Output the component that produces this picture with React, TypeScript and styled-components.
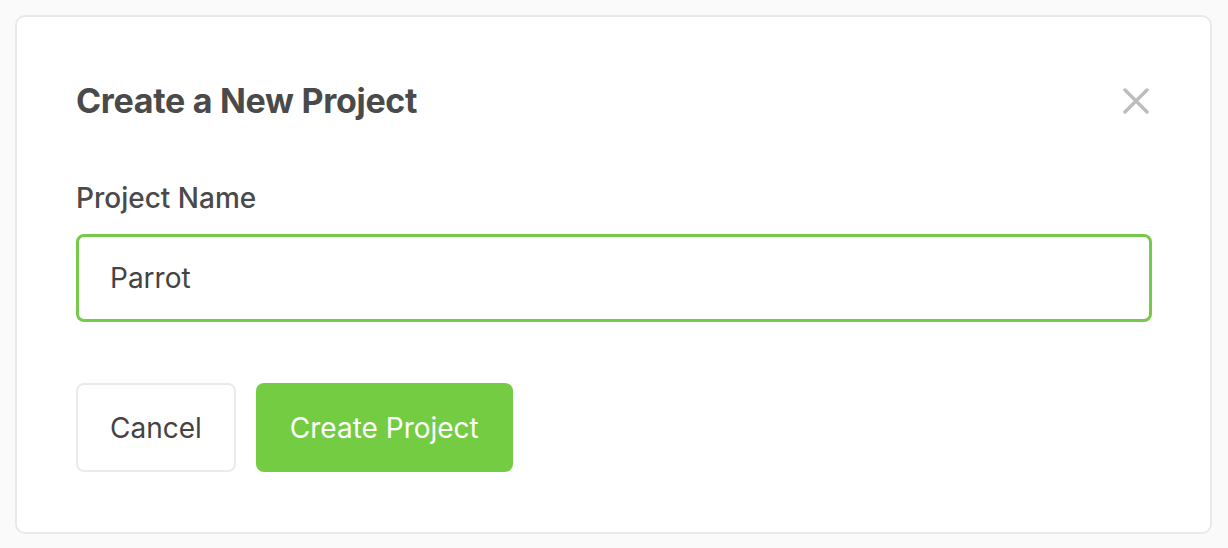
import React from "react";
import styled, { createGlobalStyle } from "styled-components";

const GlobalStyle = createGlobalStyle`
  html, body {
    margin: 0;
    padding: 0;
    background: #fafafa;
    font-family: Inter, "Noto Sans", Arial, sans-serif;
  }
`;

const Page = styled.div`
  width: 1228px;
  height: 548px;
  box-sizing: border-box;
  padding: 15px 16px 14px 15px;
`;

const Box = styled.div`
  box-sizing: border-box;
  height: 519px;
  background-color: #fff;
  border: 2px solid #e9e9e9;
  border-radius: 10px;
  padding: 0 58px 0 59px;
  display: flex;
  flex-direction: column;
`;

const BoxHeader = styled.div`
  display: flex;
  align-items: center;
  justify-content: space-between;
  margin-top: 64px;
  height: 40px;

  h3 {
    margin: 0;
    font-size: 34px;
    line-height: 40px;
    font-weight: 700;
    color: #4a4a4a;
    letter-spacing: -0.3px;
  }
`;

const CloseButton = styled.button`
  border: none;
  background: none;
  padding: 0;
  margin-right: 3px;
  width: 26px;
  height: 26px;
  cursor: pointer;
  display: grid;
  place-items: center;
`;

const Label = styled.label`
  display: block;
  margin-top: 60px;
  font-size: 28px;
  line-height: 34px;
  font-weight: 500;
  color: #4a4a4a;
`;

const NameInput = styled.input`
  box-sizing: border-box;
  margin: 19px 0 0;
  width: 100%;
  height: 88px;
  border: 3px solid #76c94a;
  border-radius: 8px;
  outline: none;
  padding: 0 31px;
  font-family: inherit;
  font-size: 28px;
  color: #444;
`;

const Actions = styled.div`
  display: flex;
  gap: 20px;
  margin-top: 61px;
`;

const Button = styled.button<{ $primary?: boolean }>`
  box-sizing: border-box;
  height: 89px;
  padding: 0 ${(p) => (p.$primary ? "34px" : "32px")};
  border-radius: 8px;
  font-family: inherit;
  font-size: 28px;
  cursor: pointer;
  border: ${(p) => (p.$primary ? "none" : "2px solid #ebebeb")};
  background: ${(p) => (p.$primary ? "#73cc42" : "#fff")};
  color: ${(p) => (p.$primary ? "#fff" : "#444")};
`;

const CloseIcon = () => (
  <svg width="26" height="26" viewBox="0 0 26 26">
    <path
      d="M2 2 L24 24 M24 2 L2 24"
      stroke="#bdbdbd"
      strokeWidth="3.4"
      strokeLinecap="round"
    />
  </svg>
);

export default function App() {
  return (
    <>
      <GlobalStyle />
      <Page>
        <Box>
          <BoxHeader>
            <h3>Create a New Project</h3>
            <CloseButton>
              <CloseIcon />
            </CloseButton>
          </BoxHeader>
          <Label htmlFor="project-name">Project Name</Label>
          <NameInput id="project-name" defaultValue="Parrot" />
          <Actions>
            <Button>Cancel</Button>
            <Button $primary>Create Project</Button>
          </Actions>
        </Box>
      </Page>
    </>
  );
}
